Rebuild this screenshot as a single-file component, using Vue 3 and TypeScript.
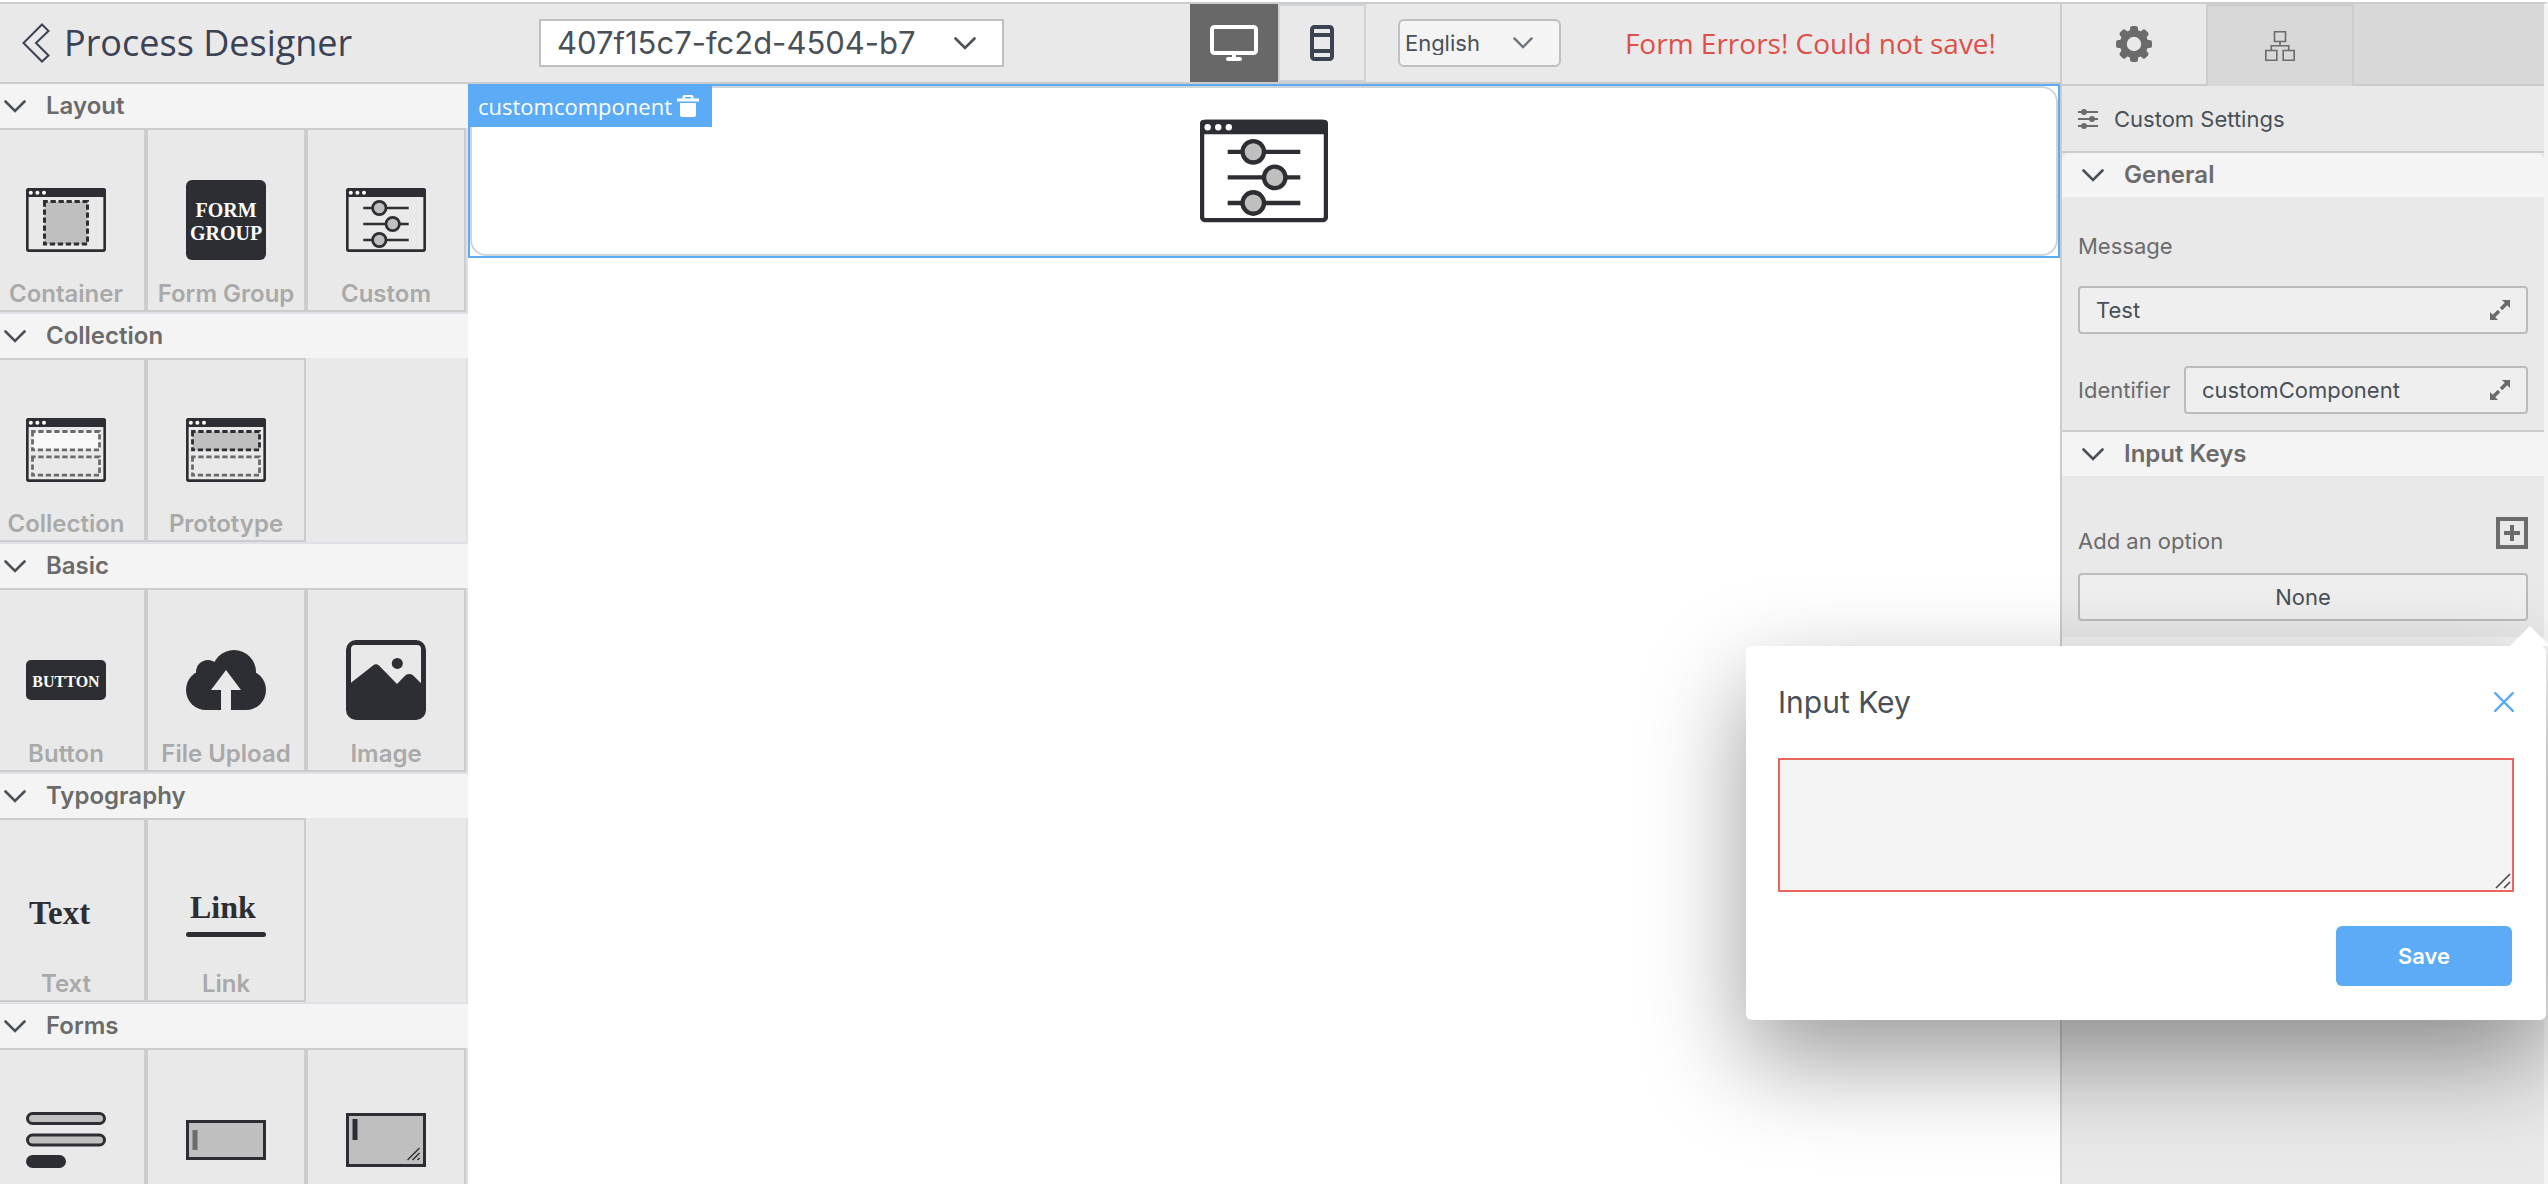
<script setup lang="ts">
import { ref } from 'vue'

interface PaletteItem {
  icon: string
  label?: string
}

interface PaletteGroup {
  title: string
  items: PaletteItem[]
}

const groups: PaletteGroup[] = [
  {
    title: 'Layout',
    items: [
      { icon: 'container', label: 'Container' },
      { icon: 'form-group', label: 'Form Group' },
      { icon: 'custom', label: 'Custom' },
    ],
  },
  {
    title: 'Collection',
    items: [
      { icon: 'collection', label: 'Collection' },
      { icon: 'prototype', label: 'Prototype' },
    ],
  },
  {
    title: 'Basic',
    items: [
      { icon: 'button', label: 'Button' },
      { icon: 'upload', label: 'File Upload' },
      { icon: 'image', label: 'Image' },
    ],
  },
  {
    title: 'Typography',
    items: [
      { icon: 'text', label: 'Text' },
      { icon: 'link', label: 'Link' },
    ],
  },
  {
    title: 'Forms',
    items: [{ icon: 'form' }, { icon: 'field' }, { icon: 'area' }],
  },
]

const teeth = [0, 45, 90, 135, 180, 225, 270, 315]
const processId = ref('407f15c7-fc2d-4504-b7')
const language = ref('English')
const message = ref('Test')
const identifier = ref('customComponent')
const inputKey = ref('')
const popoverOpen = ref(true)
</script>

<template>
  <div class="app">
    <svg class="defs" aria-hidden="true">
      <symbol id="window" viewBox="0 0 80 80">
        <rect x="1.3" y="9.3" width="77.4" height="61.4" rx="2" fill="none" stroke="#2d2e33" stroke-width="2.7" />
        <path d="M0 17V10.5A2.5 2.5 0 0 1 2.5 8h75a2.5 2.5 0 0 1 2.5 2.5V17z" fill="#2d2e33" />
        <g fill="#fff">
          <circle cx="4.8" cy="12.7" r="2" />
          <circle cx="11.4" cy="12.7" r="2" />
          <circle cx="18" cy="12.7" r="2" />
        </g>
      </symbol>
      <symbol id="custom" viewBox="0 0 80 80">
        <use href="#window" />
        <g fill="#bfbfbf" stroke="#2d2e33" stroke-width="2.7">
          <path d="M17.3 28h45.4M17.3 44h45.4M17.3 60h45.4" />
          <circle cx="33.3" cy="28" r="6.7" />
          <circle cx="46.7" cy="44" r="6.7" />
          <circle cx="33.3" cy="60" r="6.7" />
        </g>
      </symbol>
      <symbol id="chevron" viewBox="0 0 22 13">
        <path d="M1.5 1.5L11 11L20.5 1.5" fill="none" stroke="currentColor" stroke-width="2.6" stroke-linecap="round" />
      </symbol>
      <symbol id="expand" viewBox="0 0 20 20">
        <path d="M12 0h8v8zM0 12v8h8z" fill="currentColor" />
        <path d="M17 3L11 9M9 11L3 17" stroke="currentColor" stroke-width="3.6" />
      </symbol>
    </svg>

    <div class="main">
      <header class="header">
        <a class="brand" href="#">
          <svg width="28" height="40" viewBox="0 0 28 40">
            <path d="M20 1.5L26.5 8L14 20L26.5 32.5L20 38.5L1.5 20z" fill="none" stroke="currentColor" stroke-width="2" />
          </svg>
          <span>Process Designer</span>
        </a>
        <div class="select process">
          <select v-model="processId" aria-label="Process">
            <option>407f15c7-fc2d-4504-b7</option>
          </select>
          <svg width="22" height="13"><use href="#chevron" /></svg>
        </div>
        <div class="devices">
          <button class="device active" type="button" aria-label="Desktop">
            <svg width="48" height="36" viewBox="0 0 48 36" fill="currentColor">
              <rect x="2" y="2" width="44" height="26" rx="2.5" fill="none" stroke="currentColor" stroke-width="4" />
              <path d="M22 29h4v4h-4z" />
              <rect x="16" y="32" width="16" height="4" rx="2" />
            </svg>
          </button>
          <button class="device" type="button" aria-label="Mobile">
            <svg width="24" height="36" viewBox="0 0 24 36">
              <rect x="2" y="2" width="20" height="32" rx="2.5" fill="none" stroke="currentColor" stroke-width="4" />
              <path d="M3 10h18M3 26h18" stroke="currentColor" stroke-width="4" />
            </svg>
          </button>
        </div>
        <div class="select language">
          <select v-model="language" aria-label="Language">
            <option>English</option>
          </select>
          <svg width="20" height="12"><use href="#chevron" /></svg>
        </div>
        <p class="error">Form Errors! Could not save!</p>
      </header>

      <div class="workspace">
        <aside class="palette">
          <section v-for="group in groups" :key="group.title" class="group">
            <h2 class="bar">
              <svg width="22" height="13"><use href="#chevron" /></svg>{{ group.title }}
            </h2>
            <div class="items">
              <button v-for="item in group.items" :key="item.icon" class="item" type="button">
                <svg width="80" height="80" viewBox="0 0 80 80">
                  <template v-if="item.icon === 'container'">
                    <use href="#window" />
                    <rect x="18.5" y="21.5" width="43" height="42.6" fill="#bfbfbf" stroke="#2d2e33" stroke-width="3" stroke-dasharray="5.3 2.7" stroke-dashoffset="2" />
                  </template>
                  <template v-else-if="item.icon === 'form-group'">
                    <rect width="80" height="80" rx="6" fill="#2d2e33" />
                    <g class="glyph" fill="#fff" font-size="20" text-anchor="middle">
                      <text x="40" y="37">FORM</text>
                      <text x="40" y="60">GROUP</text>
                    </g>
                  </template>
                  <use v-else-if="item.icon === 'custom'" href="#custom" />
                  <template v-else-if="item.icon === 'collection' || item.icon === 'prototype'">
                    <use href="#window" />
                    <g stroke-width="2.8" stroke-dasharray="5.3 2.7" stroke-dashoffset="2.2">
                      <rect
                        x="6.5" y="21.5" width="67" height="18.4"
                        :fill="item.icon === 'prototype' ? '#bfbfbf' : '#f9f9f9'"
                        :stroke="item.icon === 'prototype' ? '#2d2e33' : '#6b6b6b'"
                      />
                      <rect x="6.5" y="46.8" width="67" height="18.4" fill="none" stroke="#6b6b6b" />
                    </g>
                  </template>
                  <template v-else-if="item.icon === 'button'">
                    <rect y="20" width="80" height="40" rx="5" fill="#2d2e33" />
                    <text class="glyph" x="40" y="47" fill="#fff" font-size="16" text-anchor="middle">BUTTON</text>
                  </template>
                  <template v-else-if="item.icon === 'upload'">
                    <g fill="#2d2e33">
                      <circle cx="48" cy="32" r="22" />
                      <circle cx="22" cy="32" r="12" />
                      <circle cx="20" cy="50" r="20" />
                      <circle cx="60" cy="50" r="20" />
                      <path d="M20 30h40v40H20z" />
                    </g>
                    <path d="M40 30L55 50H45V70H35V50H25z" fill="#e9e9e9" />
                  </template>
                  <template v-else-if="item.icon === 'image'">
                    <rect width="80" height="80" rx="10" fill="#2d2e33" />
                    <path d="M9 5h62a4 4 0 0 1 4 4v34.3L67 35.3Q63.300 32.5 59.5 35.3L51 44L33 25.5Q30 23 27 25.5L5 42.7V9a4 4 0 0 1 4-4z" fill="#e9e9e9" />
                    <circle cx="51.3" cy="23.4" r="5.5" fill="#2d2e33" />
                  </template>
                  <text v-else-if="item.icon === 'text'" class="glyph" x="3" y="54" fill="#2d2e33" font-size="33">Text</text>
                  <template v-else-if="item.icon === 'link'">
                    <text class="glyph" x="4" y="48" fill="#2d2e33" font-size="32">Link</text>
                    <rect y="62" width="80" height="5" rx="2.5" fill="#2d2e33" />
                  </template>
                  <template v-else-if="item.icon === 'form'">
                    <g fill="#bfbfbf" stroke="#2d2e33" stroke-width="3">
                      <rect x="1.5" y="13.5" width="77" height="10" rx="5" />
                      <rect x="1.5" y="35" width="77" height="10" rx="5" />
                    </g>
                    <rect y="55" width="40" height="13" rx="6.5" fill="#2d2e33" />
                  </template>
                  <template v-else-if="item.icon === 'field'">
                    <rect x="1.5" y="21.5" width="77" height="37" fill="#bfbfbf" stroke="#2d2e33" stroke-width="3" />
                    <path d="M6.5 30h5v20h-5z" fill="#6b6b6b" />
                  </template>
                  <template v-else>
                    <rect x="1.5" y="14.5" width="77" height="51" fill="#bfbfbf" stroke="#2d2e33" stroke-width="3" />
                    <path d="M6.5 19h5v21h-5z" fill="#2d2e33" />
                    <path d="M61.5 60L73.5 48M66.5 60L73.5 53M71.5 60L73.5 58" stroke="#2d2e33" stroke-width="1.4" />
                  </template>
                </svg>
                <span v-if="item.label">{{ item.label }}</span>
              </button>
            </div>
          </section>
        </aside>

        <main class="canvas">
          <div class="component">
            <div class="tag">
              customcomponent
              <button type="button" aria-label="Delete">
                <svg width="22" height="22" viewBox="0 0 22 22" fill="currentColor">
                  <path d="M0 3.5h5.5V1.5A1.5 1.5 0 0 1 7 0h8a1.5 1.5 0 0 1 1.5 1.5v2H22V6.5H0zM8 2v1.5h6V2zM3 8h16v12a2 2 0 0 1-2 2H5a2 2 0 0 1-2-2z" fill-rule="evenodd" />
                </svg>
              </button>
            </div>
            <div class="preview">
              <svg width="128" height="128"><use href="#custom" /></svg>
            </div>
          </div>
        </main>
      </div>
    </div>

    <aside class="panel">
      <nav class="tabs">
        <button class="tab active" type="button" aria-label="Settings">
          <svg width="36" height="36" viewBox="-18 -18 36 36" fill="#6b6b6b">
            <circle r="10.7" fill="none" stroke="#6b6b6b" stroke-width="7" />
            <rect v-for="angle in teeth" :key="angle" x="-4" y="-18" width="8" height="8" rx="2.5" :transform="`rotate(${angle})`" />
          </svg>
        </button>
        <button class="tab" type="button" aria-label="Structure">
          <svg width="30" height="30" viewBox="0 0 30 30" fill="none" stroke="#6b6b6b" stroke-width="1.6">
            <path d="M9.5 .8h11v9.7h-11zM.8 19.5h11v9.7h-11zM18.2 19.5h11v9.7h-11zM15 10.5v4.3M6.3 19.5v-4.7h17.4v4.7" />
          </svg>
        </button>
        <div class="tab-rest"></div>
      </nav>
      <h1 class="panel-title">
        <svg width="20" height="20" viewBox="0 0 20 20" fill="#6b6b6b">
          <path d="M0 3h20M0 10h20M0 17h20" stroke="#6b6b6b" stroke-width="2" />
          <circle cx="6" cy="3" r="3" />
          <circle cx="14" cy="10" r="3" />
          <circle cx="6" cy="17" r="3" />
        </svg>
        Custom Settings
      </h1>

      <section>
        <h2 class="bar inset rounded">
          <svg width="22" height="13"><use href="#chevron" /></svg>General
        </h2>
        <div class="fields">
          <label for="message">Message</label>
          <div class="box">
            <input id="message" v-model="message" type="text" />
            <button type="button" aria-label="Expand message">
              <svg width="20" height="20"><use href="#expand" /></svg>
            </button>
          </div>
          <div class="row">
            <label for="identifier">Identifier</label>
            <div class="box">
              <input id="identifier" v-model="identifier" type="text" />
              <button type="button" aria-label="Expand identifier">
                <svg width="20" height="20"><use href="#expand" /></svg>
              </button>
            </div>
          </div>
        </div>
      </section>

      <section>
        <h2 class="bar inset">
          <svg width="22" height="13"><use href="#chevron" /></svg>Input Keys
        </h2>
        <div class="options">
          <div class="add">
            <span>Add an option</span>
            <button type="button" aria-label="Add" @click="popoverOpen = true">
              <svg width="32" height="32" viewBox="0 0 32 32" fill="none" stroke="#6b6b6b" stroke-width="4">
                <rect x="2" y="2" width="28" height="28" />
                <path d="M16 8v16M8 16h16" />
              </svg>
            </button>
          </div>
          <div class="box empty">None</div>

          <form v-if="popoverOpen" class="popover" @submit.prevent="popoverOpen = false">
            <div class="popover-head">
              <label for="input-key">Input Key</label>
              <button type="button" aria-label="Close" @click="popoverOpen = false">
                <svg width="20" height="20" viewBox="0 0 20 20">
                  <path d="M1.2 1.2l17.6 17.6M18.8 1.2L1.2 18.8" stroke="currentColor" stroke-width="2.4" stroke-linecap="round" />
                </svg>
              </button>
            </div>
            <div class="textarea">
              <textarea id="input-key" v-model="inputKey"></textarea>
              <svg width="16" height="16" viewBox="0 0 16 16">
                <path d="M1 15L15 1M9 15L15 9" stroke="#4a4a4a" stroke-width="1.6" />
              </svg>
            </div>
            <button class="save" type="submit">Save</button>
          </form>
        </div>
      </section>
      <div class="bar"></div>
    </aside>
  </div>
</template>

<style>
body {
  margin: 0;
}
</style>

<style scoped>
.app {
  display: grid;
  grid-template-columns: minmax(0, 1fr) 488px;
  box-sizing: border-box;
  height: 100vh;
  padding-top: 2px;
  overflow: hidden;
  background: #fff;
  color: #495057;
  font-family: Inter, 'Liberation Sans', sans-serif;
  font-size: 22px;
  line-height: 24px;
}

.app *,
.app *::before {
  box-sizing: border-box;
}

.defs {
  position: absolute;
  width: 0;
  height: 0;
}

svg {
  display: block;
  flex: none;
}

button {
  padding: 0;
  border: 0;
  background: none;
  color: inherit;
  font: inherit;
  cursor: pointer;
}

input,
select,
textarea {
  color: inherit;
  font: inherit;
}

.main {
  display: flex;
  flex-direction: column;
  min-width: 0;
  min-height: 0;
}

/* Header */
.header {
  display: flex;
  flex: none;
  align-items: center;
  height: 82px;
  padding-right: 64px;
  border-top: 2px solid #ccc;
  border-bottom: 2px solid #ccc;
  background: #e9e9e9;
}

.brand {
  display: flex;
  align-items: center;
  gap: 14px;
  width: 539px;
  padding-left: 22px;
  color: #3a4254;
  font-family: 'Open Sans', sans-serif;
  font-size: 36px;
  line-height: 48px;
  text-decoration: none;
}

.select {
  position: relative;
  height: 48px;
}

.select select {
  width: 100%;
  height: 100%;
  border: 2px solid #bfbfbf;
  appearance: none;
  outline: none;
}

.select svg {
  position: absolute;
  top: 18px;
  pointer-events: none;
}

.process {
  width: 465px;
}

.process select {
  padding: 0 60px 0 16px;
  background: #fff;
  font-size: 31px;
}

.process svg {
  right: 28px;
}

.devices {
  display: flex;
  align-self: stretch;
  margin-left: auto;
}

.device {
  display: flex;
  align-items: center;
  justify-content: center;
  width: 88px;
  border: 2px solid #ced4da;
  color: #3a4254;
}

.device.active {
  border-color: #686868;
  background: #686868;
  color: #fff;
}

.language {
  width: 163px;
  margin-left: 32px;
  color: #495057;
}

.language select {
  padding: 0 40px 0 5px;
  border-radius: 6px;
  background: #f4f4f4;
}

.language svg {
  right: 28px;
  color: #6c757d;
}

.error {
  min-width: 370px;
  margin: 0 0 0 64px;
  color: #df4f49;
  font-family: 'Open Sans', sans-serif;
  font-size: 28px;
  line-height: 40px;
  white-space: nowrap;
}

/* Palette */
.workspace {
  display: flex;
  flex: 1;
  min-height: 0;
}

.palette {
  flex: none;
  width: 468px;
  overflow: hidden auto;
  background: #e9e9e9;
  scrollbar-width: none;
}

.bar {
  display: flex;
  align-items: center;
  gap: 20px;
  height: 44px;
  margin: 0;
  padding-left: 4px;
  background: #f4f4f4;
  color: #6b6b6b;
  font-size: 24px;
  font-weight: 600;
}

.bar svg {
  color: #495057;
}

.items {
  display: flex;
  height: 186px;
  padding-right: 2px;
  border-right: 2px solid #dee2e6;
  border-bottom: 2px solid #dee2e6;
}

.item {
  display: flex;
  flex: none;
  flex-direction: column;
  align-items: center;
  gap: 20px;
  width: 160px;
  height: 184px;
  padding-top: 50px;
  border: 2px solid #ccc;
  color: #a9a9a9;
  font-size: 24px;
  font-weight: 600;
  line-height: 28px;
  white-space: nowrap;
}

.item:first-child {
  margin-left: -14px;
}

.glyph {
  font-family: 'Liberation Serif', serif;
  font-weight: 700;
}

/* Canvas */
.canvas {
  flex: 1;
  min-width: 0;
}

.component {
  position: relative;
  height: 174px;
  border: 2px solid #5babf7;
}

.tag {
  position: absolute;
  top: -2px;
  left: -2px;
  display: flex;
  align-items: center;
  gap: 5px;
  height: 43px;
  padding: 0 13px 0 10px;
  background: #5babf7;
  color: #fff;
  font-family: 'Open Sans', sans-serif;
}

.preview {
  display: flex;
  align-items: center;
  justify-content: center;
  height: 100%;
  border: 2px solid #ced4da;
  border-radius: 16px;
}

/* Settings panel */
.panel {
  border-top: 2px solid #ccc;
  border-right: 4px solid #f4f4f4;
  border-left: 2px solid #ccc;
  background: #e9e9e9;
}

.tabs {
  display: flex;
  height: 82px;
  background: #d8d8d8;
}

.tab {
  display: flex;
  align-items: center;
  justify-content: center;
  width: 148px;
  border: 2px solid #ccc;
  border-bottom: 0;
}

.tab.active {
  width: 144px;
  border: 0;
  border-bottom: 2px solid #ccc;
  background: #e9e9e9;
}

.tab-rest {
  flex: 1;
  border-bottom: 2px solid #ccc;
}

.panel-title {
  display: flex;
  align-items: center;
  gap: 16px;
  height: 67px;
  margin: 0;
  padding-left: 16px;
  border-bottom: 2px solid #ccc;
  font-size: 22px;
  font-weight: 400;
}

.bar.inset {
  padding-left: 20px;
}

.bar.rounded {
  border-radius: 8px 8px 0 0;
}

.fields {
  padding: 37px 16px 16px;
  border-bottom: 2px solid #ccc;
}

.fields label {
  display: block;
  color: #6b6b6b;
}

.box {
  display: flex;
  align-items: center;
  height: 48px;
  padding: 0 16px;
  border: 2px solid #bbb;
  border-radius: 4px;
  background: #efefef;
}

.fields > .box {
  margin-top: 28px;
}

.box input {
  flex: 1;
  min-width: 0;
  padding: 0;
  border: 0;
  outline: none;
  background: none;
}

.box button {
  color: #6b6b6b;
}

.row {
  display: flex;
  align-items: center;
  justify-content: space-between;
  margin-top: 32px;
}

.row .box {
  width: 344px;
}

.options {
  position: relative;
  padding: 41px 16px 16px;
}

.add {
  display: flex;
  align-items: flex-end;
  justify-content: space-between;
  margin-bottom: 24px;
  color: #6b6b6b;
  line-height: 16px;
}

.box.empty {
  justify-content: center;
}

/* Popover */
.popover {
  position: absolute;
  top: calc(100% + 9px);
  right: -2px;
  width: 800px;
  padding: 46px 32px 34px;
  border-radius: 6px;
  background: #fff;
  box-shadow: 0 40px 100px rgba(0, 0, 0, 0.4);
}

.popover::before {
  position: absolute;
  right: -4px;
  bottom: 100%;
  border: 20px solid transparent;
  border-top: 0;
  border-bottom-color: #fff;
  content: '';
}

.popover-head {
  display: flex;
  align-items: center;
  justify-content: space-between;
  margin-bottom: 46px;
  line-height: 20px;
}

.popover-head label {
  font-size: 30px;
}

.popover-head button {
  color: #5babf7;
}

.textarea {
  position: relative;
}

.textarea svg {
  position: absolute;
  right: 3px;
  bottom: 3px;
  pointer-events: none;
}

.textarea textarea {
  display: block;
  width: 100%;
  height: 134px;
  padding: 12px;
  border: 2px solid #ea655d;
  outline: none;
  background: #f4f4f4;
  resize: vertical;
}

.textarea textarea::-webkit-resizer {
  background: transparent;
}

.save {
  display: block;
  width: 176px;
  height: 60px;
  margin: 34px 2px 0 auto;
  border-radius: 6px;
  background: #5babf7;
  color: #fff;
  font-weight: 600;
}
</style>
